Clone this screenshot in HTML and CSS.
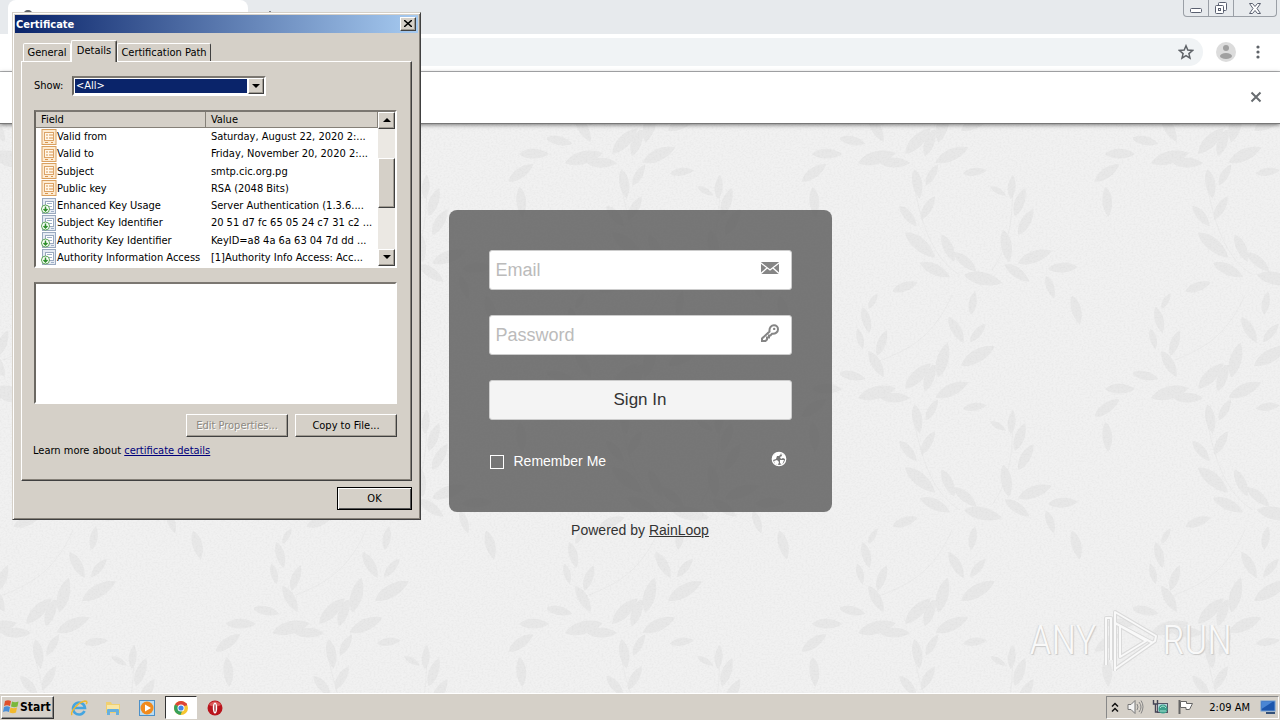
FILE: index.html
```html
<!DOCTYPE html>
<html lang="en">
<head>
<meta charset="utf-8">
<title>Certificate</title>
<link rel="stylesheet" href="styles.css">
</head>
<body>
<svg class="defs" aria-hidden="true">
  <defs>
    <symbol id="field" viewBox="0 0 16 16">
      <rect x="1" y="0.5" width="14" height="15" fill="#fdebd2" stroke="#d9a05f"/>
      <rect x="3.500" y="3.500" width="9" height="8" fill="#fff6e8" stroke="#dba367"/>
      <path d="M5 6h2M8 6h4M5 9h2M8 9h4M4 13.5h3M10 13.5h2" stroke="#d9964f"/>
    </symbol>
    <symbol id="ext" viewBox="0 0 16 16">
      <rect x="1.500" y="0.5" width="13" height="15" fill="#e6ebf3" stroke="#9aa9bf"/>
      <rect x="4.500" y="3.500" width="8" height="8" fill="#fff" stroke="#9aa9bf"/>
      <path d="M6 5.5h5M6 8.500h5M10 13.5h3" stroke="#9fb0c8"/>
      <circle cx="4.500" cy="11" r="4" fill="#fff" stroke="#5aa655"/>
      <path d="M4.500 8.500v4M2.500 11l2 2 2-2" stroke="#2f8f2c" stroke-width="1.500" fill="none"/>
    </symbol>
  </defs>
</svg>
<div class="desktop">
  <div class="browser">
    <header class="tabstrip">
      <div class="tab"><svg width="10" height="10"><circle cx="5" cy="5" r="4" fill="none" stroke="#5f6368" stroke-width="2"/></svg></div>
      <button type="button" class="plain newtab" aria-label="New tab"><svg width="10" height="10"><path d="M5 0v10M0 5h10" stroke="#5f6368" stroke-width="1.500"/></svg></button>
      <div class="winbtns">
        <button type="button" aria-label="Minimize"><svg width="14" height="12"><rect x="1.500" y="6.500" width="11" height="4" rx="1" fill="#fff" stroke="#5a6070"/></svg></button>
        <button type="button" aria-label="Restore"><svg width="14" height="14"><rect x="4.500" y="1.500" width="8" height="8" rx="1" fill="#fff" stroke="#5a6070"/><rect x="1.500" y="4.500" width="8" height="8" rx="1" fill="#fff" stroke="#5a6070"/><rect x="4.500" y="7.500" width="2" height="2" fill="none" stroke="#5a6070"/></svg></button>
        <button type="button" class="wide" aria-label="Close"><svg width="14" height="13"><path d="M1.500 1.500h3L7 4.500l2.500-3h3L9 6.500l3.500 5h-3L7 8.500l-2.500 3h-3L5 6.500z" fill="#fff" stroke="#5a6070"/></svg></button>
      </div>
    </header>
    <div class="toolbar">
      <div class="omnibox">
        <button type="button" class="plain" aria-label="Bookmark"><svg width="16" height="16" viewBox="0 0 16 16"><path d="M8 1.800l1.800 4.300 4.700.4-3.600 3.100 1.100 4.600L8 11.700l-4 2.500 1.100-4.600L1.500 6.500l4.700-.4z" fill="none" stroke="#5f6368" stroke-width="1.500"/></svg></button>
      </div>
      <button type="button" class="plain" aria-label="Profile"><svg width="20" height="20"><circle cx="10" cy="10" r="10" fill="#dcdcdc"/><circle cx="10" cy="6" r="3" fill="#a0a0a0"/><ellipse cx="10" cy="14" rx="6" ry="3" fill="#a0a0a0"/></svg></button>
      <button type="button" class="plain" aria-label="Menu"><svg width="4" height="14"><g fill="#5f6368"><circle cx="2" cy="2" r="1.600"/><circle cx="2" cy="7" r="1.600"/><circle cx="2" cy="12" r="1.600"/></g></svg></button>
    </div>
    <div class="infobar">
      <button type="button" class="plain" aria-label="Dismiss"><svg width="12" height="12"><path d="M1.500 1.500l9 9M10.500 1.500l-9 9" stroke="#686c70" stroke-width="2"/></svg></button>
    </div>
    <main class="page">
      <svg class="wall" aria-hidden="true">
        <defs>
          <filter id="grain" x="0" y="0" width="100%" height="100%"><feTurbulence type="fractalNoise" baseFrequency="0.5 0.6" numOctaves="2" seed="4"/><feColorMatrix values="0 0 0 0 0.500  0 0 0 0 0.500  0 0 0 0 0.500  0.300 0 0 0 -0.120"/></filter>
          <path id="leaf" d="M-15 0C-8-7 6-7 15 0 6 6-8 6-15 0z"/>
          <g id="sprigs" fill="#e8e8e8">
            <path d="M30 235C60 222 90 215 112 165M172 45c2 40-2 70-20 95M75 60c8 40 20 70 45 85" fill="none" stroke="#ebebeb"/>
            <path d="M120 145c35 8 75-8 100 5 15 8 20 30 22 60M28 165c0 30 0 50 20 75M262 100c5-40 10-60 40-75" fill="none" stroke="#f3f3f3"/>
            <use href="#leaf" transform="translate(37 28) rotate(-15) scale(1.300)"/>
            <use href="#leaf" transform="translate(112 25) rotate(-25) scale(1.200)"/>
            <use href="#leaf" transform="translate(55 33)"/>
            <use href="#leaf" transform="translate(90 12) rotate(-70)"/>
            <use href="#leaf" transform="translate(77 54) rotate(80)"/>
            <use href="#leaf" transform="translate(92 45) rotate(-60) scale(.8)"/>
            <use href="#leaf" transform="translate(68 86) rotate(50) scale(.9)"/>
            <use href="#leaf" transform="translate(88 78) rotate(-60) scale(.9)"/>
            <use href="#leaf" transform="translate(80 115) rotate(40) scale(1.300)"/>
            <use href="#leaf" transform="translate(108 118) rotate(65)"/>
            <use href="#leaf" transform="translate(95 140) rotate(25) scale(1.100)"/>
            <use href="#leaf" transform="translate(125 132) rotate(40)"/>
            <use href="#leaf" transform="translate(143 149) rotate(12) scale(1.300)"/>
            <use href="#leaf" transform="translate(172 57) rotate(-85) scale(.8)"/>
            <use href="#leaf" transform="translate(158 61) rotate(30) scale(.6)"/>
            <use href="#leaf" transform="translate(135 42) rotate(-8) scale(.8)"/>
            <use href="#leaf" transform="translate(166 116) rotate(80) scale(1.100)"/>
            <use href="#leaf" transform="translate(180 72) rotate(-70)"/>
            <use href="#leaf" transform="translate(186 92) rotate(-60)"/>
            <use href="#leaf" transform="translate(195 127) rotate(-20) scale(1.200)"/>
            <use href="#leaf" transform="translate(177 143) rotate(35)"/>
            <use href="#leaf" transform="translate(223 138) rotate(-4)"/>
            <use href="#leaf" transform="translate(210 157) rotate(70) scale(.8)"/>
            <use href="#leaf" transform="translate(236 180) rotate(75)"/>
            <use href="#leaf" transform="translate(65 157) rotate(-20) scale(.9)"/>
            <use href="#leaf" transform="translate(133 173) rotate(-80) scale(.8)"/>
            <use href="#leaf" transform="translate(33 171) rotate(-60) scale(.6)"/>
            <use href="#leaf" transform="translate(26 190) rotate(75) scale(.9)"/>
            <use href="#leaf" transform="translate(20 209) rotate(75) scale(.7)"/>
            <use href="#leaf" transform="translate(42 213) rotate(-70) scale(.9)"/>
            <use href="#leaf" transform="translate(116 200) rotate(60)"/>
            <use href="#leaf" transform="translate(138 203) rotate(-50) scale(.8)"/>
            <use href="#leaf" transform="translate(138 226) rotate(-30) scale(1.300)"/>
            <use href="#leaf" transform="translate(103 230) rotate(-75) scale(1.200)"/>
            <use href="#leaf" transform="translate(78 246) rotate(-45) scale(1.200)"/>
            <use href="#leaf" transform="translate(36 234) rotate(60)"/>
            <use href="#leaf" transform="translate(12 246) rotate(12) scale(.9)"/>
            <use href="#leaf" transform="translate(280 24)"/>
            <use href="#leaf" transform="translate(267 43) rotate(-35)"/>
            <use href="#leaf" transform="translate(267 72) rotate(85)"/>
          </g>
          <pattern id="damask" width="293" height="235" patternUnits="userSpaceOnUse" patternTransform="translate(-39 6)">
            <rect width="293" height="235" fill="#f1f1f1"/>
            <use href="#sprigs"/><use href="#sprigs" y="-235"/><use href="#sprigs" x="-293"/>
          </pattern>
        </defs>
        <rect width="100%" height="100%" fill="url(#damask)"/>
        <rect width="100%" height="100%" filter="url(#grain)"/>
      </svg>
      <form class="login">
        <div class="field">
          <input type="email" placeholder="Email" aria-label="Email">
          <svg width="18" height="12" viewBox="0 0 18 12"><rect width="18" height="12" rx="1" fill="#858585"/><path d="M0 1l9 7 9-7M0 11.500l6-5.500M18 11.500L12 6" stroke="#fff" stroke-width="1.300" fill="none"/></svg>
        </div>
        <div class="field">
          <input type="password" placeholder="Password" aria-label="Password">
          <svg width="18" height="18" viewBox="0 0 18 18"><path d="M8.500 7.500C8 3.500 10.500 1.200 13 1.200c2.400 0 4 1.800 4 4 0 2.600-2.400 5-6 4.500L9.500 11.500H8v2H6v2L4.500 17H1v-2.500z" fill="none" stroke="#858585" stroke-width="2"/><circle cx="13.200" cy="4.900" r="1.200" fill="#858585"/></svg>
        </div>
        <button type="submit" class="signin">Sign In</button>
        <div class="options">
          <label><input type="checkbox">Remember Me</label>
          <button type="button" class="plain" aria-label="Language"><svg width="16" height="16" viewBox="0 0 16 16"><circle cx="8" cy="8" r="6.700" fill="none" stroke="#fff" stroke-width="1.300"/><path d="M5 2l4-1 1 2-2 2-2 0-1 3-3 1-.5-3z" fill="#fff"/><path d="M10 2l4 3 0 3-2-1-2 1-1-2 2-1zM3 10l3-1 2 2-1 3-3-1zM9 9l4 0-2 5-2-2z" fill="#fff"/></svg></button>
        </div>
      </form>
      <p class="powered">Powered by <a href="#">RainLoop</a></p>
      <div class="watermark"><span>ANY</span>
        <svg width="56" height="64" viewBox="0 0 56 64"><g fill="none" stroke-linejoin="round"><g stroke="#dadada" stroke-width="4"><path d="M13 62V3l41 24-1 5-40 28M4 56V9h5v42M13 14l38 20M18 48V17l26 15z"/></g><g stroke="#f9f9f9" stroke-width="2"><path d="M13 62V3l41 24-1 5-40 28M4 56V9h5v42M13 14l38 20M18 48V17l26 15z"/></g></g></svg>
        <span>RUN</span></div>
    </main>
  </div>

  <footer class="taskbar">
    <button type="button" class="start"><svg width="17" height="16" viewBox="0 0 17 16"><path d="M2 2c2-1 4-1 6 0L7 7C5 6 3 6 1 7z" fill="#e0502a"/><path d="M9 2.500c2 1 4 1 6.500 0L14.500 7.500c-2 1-4 1-6.500 0z" fill="#7ab83c"/><path d="M1 8c2-1 4-1 6 0l-1 5c-2-1-4-1-6 0z" fill="#4a8fd8"/><path d="M7.500 8.500c2 1 4 1 6.500 0l-1 5c-2 1-4 1-6.500 0z" fill="#f2b92c"/></svg>Start</button>
    <nav class="apps">
      <button type="button" aria-label="Internet Explorer"><svg width="18" height="18" viewBox="0 0 18 18"><path d="M14.500 12A6 6 0 1 1 15 9H4" fill="none" stroke="#45a5e0" stroke-width="2.600"/><path d="M2 16c-2-3 6-13 13-14 3 0 2 2 1 3" fill="none" stroke="#efb92e" stroke-width="1.400"/></svg></button>
      <button type="button" aria-label="Explorer"><svg width="18" height="18" viewBox="0 0 18 18"><path d="M2 3h5l1 2h8v9H2z" fill="#f0cf70"/><path d="M3 6h12v6H3z" fill="#f9e6a4"/><path d="M3 16v-5q0-1 1-1h10q1 0 1 1v5h-3v-3H6v3z" fill="#67b0de"/></svg></button>
      <button type="button" aria-label="Media Player"><svg width="18" height="18" viewBox="0 0 18 18"><rect x="1.500" y="1.500" width="15" height="15" fill="#b9dcf3" stroke="#4c90c8"/><circle cx="9" cy="9" r="6.500" fill="#f08a1d"/><path d="M7 5.500v7L13 9z" fill="#fff"/></svg></button>
      <button type="button" class="active" aria-label="Chrome"><svg width="16" height="16" viewBox="0 0 16 16"><circle cx="8" cy="8" r="7" fill="#f6c631"/><path d="M8 8L2 4.500A7 7 0 0 1 14 4.500z" fill="#dc4437"/><path d="M2 4.500A7 7 0 0 0 7.500 15L10 9z" fill="#37a05a"/><path d="M8 4.500h6" stroke="#dc4437" stroke-width="2"/><circle cx="8" cy="8" r="3.500" fill="#fff"/><circle cx="8" cy="8" r="2.600" fill="#4285e8"/></svg></button>
      <button type="button" aria-label="Opera"><svg width="16" height="16" viewBox="0 0 16 16"><circle cx="8" cy="8" r="7.500" fill="#b9141c"/><path d="M2 5a7 7 0 0 1 12 0Q8 8 2 5z" fill="#db5a58"/><ellipse cx="8" cy="8" rx="2.200" ry="5.500" fill="#fff"/><ellipse cx="8" cy="8" rx=".6" ry="4" fill="#8a1015"/></svg></button>
    </nav>
    <div class="tray">
      <svg width="8" height="11"><path d="M1 4.500L4 1.500l3 3M1 9.500l3-3 3 3" stroke="#111" stroke-width="1.500" fill="none"/></svg>
      <svg width="17" height="16"><path d="M1 5.500h3l4-4v13l-4-4H1z" fill="#f4f4f4" stroke="#777"/><path d="M10 5q2 3 0 6M12 3q4 5 0 10M14 1.500q4 6 0 13" fill="none" stroke="#858585"/></svg>
      <svg width="17" height="16"><rect x="5.500" y="4.500" width="10" height="9" fill="#b8d6dc" stroke="#556"/><circle cx="11" cy="10" r="4.500" fill="#3d9f8b"/><path d="M8 9q3-4 6 0M8 12h6" stroke="#a9e4d2" fill="none"/><path d="M1.500 1v4h4V1M3.500 5v8h3" fill="none" stroke="#445" stroke-width="1.400"/></svg>
      <svg width="16" height="16"><path d="M2.500 1v14" stroke="#666" stroke-width="2"/><path d="M3.500 2.500h6v2h6l-3 6H9v-2H3.500z" fill="#fff" stroke="#666"/></svg>
      <time>2:09 AM</time>
      <svg width="16" height="15"><rect x="1" y="1" width="14" height="10" fill="#1c56ad" stroke="#6c9bd2"/><path d="M1.500 9L13 1.500H1.500z" fill="#4a86d4"/><path d="M6 13h9" stroke="#335078" stroke-width="2"/></svg>
    </div>
  </footer>

  <section class="dialog" role="dialog" aria-labelledby="dlg-title">
    <div class="titlebar"><span id="dlg-title">Certificate</span><button type="button" class="raised x" aria-label="Close"><svg width="8" height="7"><path d="M0 0l8 7M8 0L0 7" stroke="#000" stroke-width="1.500"/></svg></button></div>
    <div class="dlg-body">
      <div class="tabs" role="tablist">
        <button type="button" role="tab">General</button>
        <button type="button" role="tab" class="on" aria-selected="true">Details</button>
        <button type="button" role="tab">Certification Path</button>
      </div>
      <div class="pane">
        <div class="show"><label for="show">Show:</label>
          <div class="combo"><select id="show"><option>&lt;All&gt;</option></select><span class="raised arrow"><svg width="8" height="4"><path d="M0 0h8L4 4z"/></svg></span></div>
        </div>
        <div class="list sunken">
          <table>
            <thead><tr><th>Field</th><th>Value</th></tr></thead>
            <tbody>
              <tr><td><span><svg width="16" height="16"><use href="#field"/></svg>Valid from</span></td><td>Saturday, August 22, 2020 2:...</td></tr>
              <tr><td><span><svg width="16" height="16"><use href="#field"/></svg>Valid to</span></td><td>Friday, November 20, 2020 2:...</td></tr>
              <tr><td><span><svg width="16" height="16"><use href="#field"/></svg>Subject</span></td><td>smtp.cic.org.pg</td></tr>
              <tr><td><span><svg width="16" height="16"><use href="#field"/></svg>Public key</span></td><td>RSA (2048 Bits)</td></tr>
              <tr><td><span><svg width="16" height="16"><use href="#ext"/></svg>Enhanced Key Usage</span></td><td>Server Authentication (1.3.6....</td></tr>
              <tr><td><span><svg width="16" height="16"><use href="#ext"/></svg>Subject Key Identifier</span></td><td>20 51 d7 fc 65 05 24 c7 31 c2 ...</td></tr>
              <tr><td><span><svg width="16" height="16"><use href="#ext"/></svg>Authority Key Identifier</span></td><td>KeyID=a8 4a 6a 63 04 7d dd ...</td></tr>
              <tr><td><span><svg width="16" height="16"><use href="#ext"/></svg>Authority Information Access</span></td><td>[1]Authority Info Access: Acc...</td></tr>
            </tbody>
          </table>
          <div class="scroll">
            <button type="button" class="raised" aria-label="Scroll up"><svg width="8" height="4"><path d="M0 4h8L4 0z"/></svg></button>
            <div class="track"><div class="raised thumb"></div></div>
            <button type="button" class="raised" aria-label="Scroll down"><svg width="8" height="4"><path d="M0 0h8L4 4z"/></svg></button>
          </div>
        </div>
        <textarea class="sunken" aria-label="Field value" readonly></textarea>
        <div class="actions"><button type="button" class="raised" disabled>Edit Properties...</button><button type="button" class="raised">Copy to File...</button></div>
        <p class="learn">Learn more about <a href="#">certificate details</a></p>
      </div>
      <div class="okrow"><button type="button" class="raised ok">OK</button></div>
    </div>
  </section>
</div>
</body>
</html>
```
FILE: styles.css
```css
* { box-sizing: border-box; }
body { margin: 0; font-family: "DejaVu Sans Condensed", "DejaVu Sans", sans-serif; font-size: 11px; line-height: 17px; color: #000; }
button, select, input, textarea { font: inherit; color: inherit; margin: 0; }
svg { display: block; flex: none; }
.defs { position: absolute; width: 0; height: 0; }
.desktop { position: relative; display: flex; flex-direction: column; min-height: 100vh; overflow: hidden; }
.plain { border: 0; padding: 0; background: none; }

/* Browser window */
.browser { flex: 1; display: flex; flex-direction: column; }
.tabstrip { height: 34px; background: #e7eaed; display: flex; align-items: flex-start; padding: 0 3px 0 8px; }
.tab { width: 240px; height: 34px; background: #fff; border-radius: 8px 8px 0 0; padding: 10px 15px; }
.newtab { margin: 11px 0 0 17px; }
.winbtns { margin-left: auto; display: flex; height: 17px; border: 1px solid #9a9fa6; border-top: 0; border-radius: 0 0 4px 4px; }
.winbtns button { width: 25px; border: 0; border-right: 1px solid #9a9fa6; background: none; padding: 0; display: flex; align-items: center; justify-content: center; }
.winbtns .wide { width: 42px; border-right: 0; }
.toolbar { height: 38px; background: #fff; border-bottom: 1px solid #b4b6b8; display: flex; align-items: center; gap: 20px; padding: 0 20px 2px 90px; }
.omnibox { flex: 1; height: 28px; border-radius: 14px; background: #f0f3f5; display: flex; align-items: center; justify-content: flex-end; padding-right: 9px; margin-right: -7px; }
.infobar { height: 52px; background: #fff; border-bottom: 1px solid #777; box-shadow: 0 1px 4px rgba(0,0,0,.5); position: relative; z-index: 1; display: flex; align-items: center; justify-content: flex-end; padding: 0 18px 2px 0; }

/* Login page */
.page { flex: 1; position: relative; padding-top: 86px; display: flex; flex-direction: column; align-items: center; font-family: "Liberation Sans", Arial, sans-serif; color: #333; background: #f1f1f1; }
.wall { position: absolute; inset: 0; width: 100%; height: 100%; }
.login { position: relative; width: 383px; padding: 40px; border-radius: 8px; background: rgba(92,92,92,.82); display: flex; flex-direction: column; gap: 25px; }
.field { height: 40px; display: flex; align-items: center; background: #fff; border: 1px solid #ccc; border-radius: 3px; padding: 0 12px 4px 6px; }
.field input { flex: 1; min-width: 0; border: 0; padding: 4px 0 0; background: none; font-size: 18px; outline: 0; }
.field input::placeholder { color: #bbb; opacity: 1; }
.signin { height: 40px; border: 1px solid #ccc; border-radius: 3px; background: #f4f4f4; color: #333; font-size: 17px; padding: 0 0 2px; }
.options { display: flex; justify-content: space-between; align-items: center; padding: 0 5px 0 0; color: #fff; height: 27px; }
.options label { display: flex; align-items: center; gap: 10px; font-size: 14px; padding-top: 6px; }
.options input { appearance: none; width: 14px; height: 14px; border: 1px solid #fff; margin-left: 1px; }
.powered { position: relative; margin: 8px 0 0; font-size: 14px; line-height: 20px; }
.powered a { color: #333; text-decoration: underline; }
.watermark { position: absolute; right: 48px; bottom: 20px; display: flex; align-items: center; gap: 5px; font-family: "Liberation Sans Narrow", "Roboto Condensed", "Liberation Sans", sans-serif; font-weight: 300; font-size: 40px; line-height: 64px; color: #f9f9f9; text-shadow: 1px 1px 1px #c8c8c8, -1px 0 1px #d8d8d8; }

/* Taskbar */
.taskbar { height: 27px; background: #d5d0c8; box-shadow: inset 0 1px #fff; display: flex; align-items: stretch; padding: 3px 1px 1px 1px; }
.start { width: 53px; border: 1px solid; border-color: #fff #333 #333 #fff; box-shadow: inset -1px -1px #888; background: #d5d0c8; padding: 0 1px 1px; display: flex; align-items: center; font-size: 12px; font-weight: bold; }
.apps { display: flex; margin-left: 9px; gap: 2px; }
.apps button { width: 32px; border: 1px solid transparent; background: none; padding: 0; display: flex; align-items: center; justify-content: center; }
.apps .active { background: #fff; border-color: #333 #fff #fff #333; }
.tray { margin-left: auto; display: flex; align-items: center; gap: 8px; border: 1px solid; border-color: #888 #fff #fff #888; padding: 0 2px 1px 4px; }
.tray time { margin: 0 2px 0 8px; }

/* Classic controls */
.raised { background: #d5d0c8; border: 1px solid; border-color: #fff #404040 #404040 #fff; box-shadow: inset -1px -1px #a09b92; padding: 0 0 1px; display: flex; align-items: center; justify-content: center; }
.sunken { background: #fff; border: 2px solid; border-color: #7b7771 #fff #fff #6b6862; }

/* Certificate dialog */
.dialog { position: absolute; left: 12px; top: 12px; width: 409px; z-index: 2; background: #d5d0c8; border: 1px solid; border-color: #d5d0c8 #404040 #404040 #d5d0c8; box-shadow: inset 1px 1px #fff, inset -1px -1px #858078; padding: 2px; }
.titlebar { height: 18px; background: linear-gradient(90deg, #0a246a, #a6caf0); display: flex; align-items: center; justify-content: space-between; color: #fff; font-weight: bold; padding: 0 2px 0 1px; }
.x { width: 16px; height: 14px; }
.dlg-body { padding: 7px 6px; }
.tabs { display: flex; align-items: flex-end; padding-left: 2px; position: relative; z-index: 1; margin-bottom: -1px; }
.tabs button { height: 18px; background: #d5d0c8; border: 1px solid; border-color: #fff #404040 transparent #fff; border-bottom: 0; border-radius: 2px 2px 0 0; padding: 0; width: 94px; margin-bottom: 1px; }
.tabs button:first-child { width: 48px; border-right-color: #fff; }
.tabs .on { height: 22px; width: 46px; margin-bottom: 0; padding-bottom: 3px; box-shadow: inset -1px 0 #858078; }
.pane { border: 1px solid; border-color: #fff #404040 #404040 #fff; box-shadow: inset -1px -1px #858078; padding: 14px 14px 21px 12px; }
.show { display: flex; align-items: center; gap: 11px; }
.show label { width: 27px; padding-bottom: 1px; }
.combo { width: 194px; height: 20px; border: 2px solid; border-color: #7b7771 #fff #fff #6b6862; background: #fff; display: flex; }
.combo select { flex: 1; appearance: none; border: 1px solid #fff; border-radius: 0; background: #0a246a; color: #fff; padding: 0 0 0 1px; line-height: 14px; outline: 0; }
.arrow { width: 16px; }
.list { height: 158px; margin-top: 14px; display: flex; }
.list table { flex: 1; border-collapse: collapse; table-layout: fixed; line-height: 17px; }
.list th { font-weight: normal; text-align: left; height: 16px; line-height: 16px; padding: 0 0 0 5px; background: #d5d0c8; box-shadow: inset -1px -1px #858078; }
.list td { height: 17px; padding: 0 0 0 5px; white-space: nowrap; }
.list td span { display: flex; align-items: center; }
.scroll { width: 17px; display: flex; flex-direction: column; }
.scroll button { height: 17px; }
.track { flex: 1; background: #ebe8e3; padding-top: 29px; }
.thumb { height: 50px; }
.pane textarea { display: block; width: 100%; height: 122px; margin-top: 14px; resize: none; }
.actions { display: flex; justify-content: flex-end; gap: 7px; margin-top: 10px; }
.actions button { width: 102px; height: 23px; }
.actions button:disabled { color: #8d8982; text-shadow: 1px 1px #fff; }
.learn { margin: 5px 0 0 -1px; }
.learn a { color: #00007b; }
.okrow { display: flex; justify-content: flex-end; margin-top: 6px; }
.ok { width: 75px; height: 23px; border-color: #000; box-shadow: inset 1px 1px #fff, inset -1px -1px #555; }
```
